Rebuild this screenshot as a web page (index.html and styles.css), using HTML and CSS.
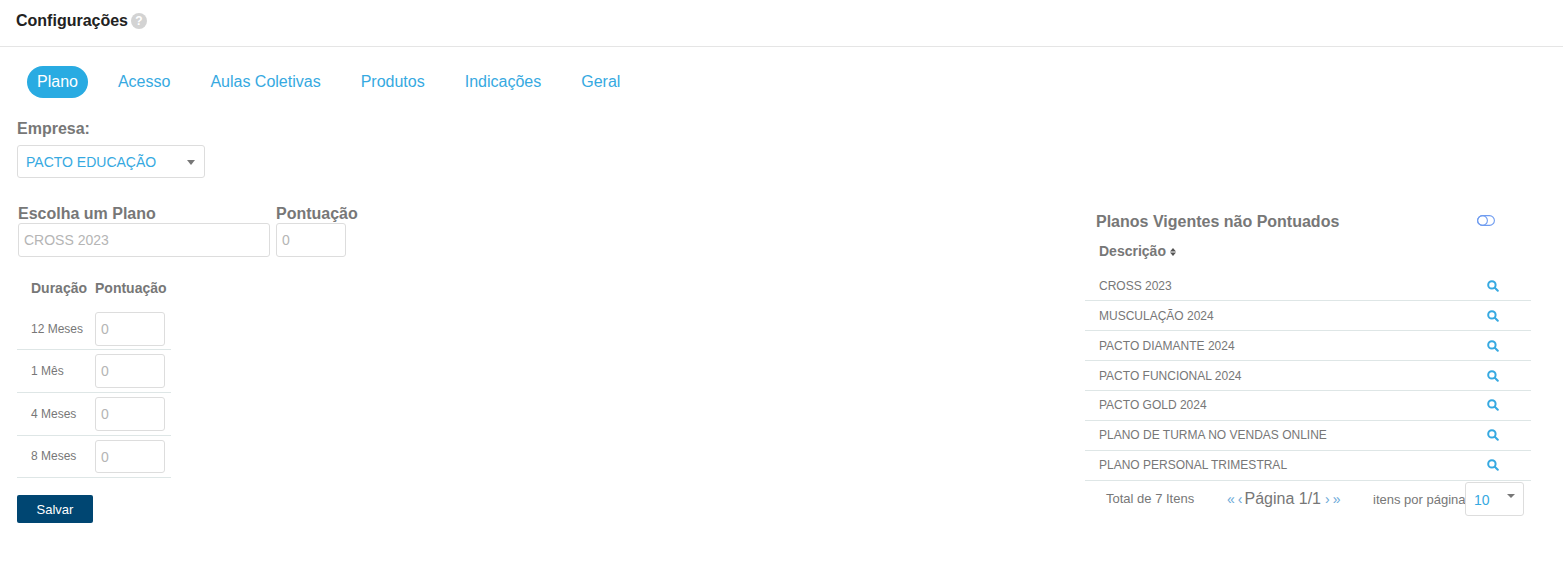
FILE: index.html
```html
<!DOCTYPE html>
<html lang="pt">
<head>
<meta charset="utf-8">
<title>Configurações</title>
<link rel="stylesheet" href="styles.css">
</head>
<body>
<header class="topbar">
  <h1 class="title">Configurações</h1>
  <svg class="help" viewBox="0 0 16 16" width="16" height="16"><circle cx="8" cy="8" r="8" fill="#d3d3d3"/><text x="8" y="12.4" text-anchor="middle" class="help-mark">?</text></svg>
</header>
<main class="content">
  <nav class="tabs">
    <a class="tab active">Plano</a>
    <a class="tab">Acesso</a>
    <a class="tab">Aulas Coletivas</a>
    <a class="tab">Produtos</a>
    <a class="tab">Indicações</a>
    <a class="tab">Geral</a>
  </nav>
  <label class="company-label">Empresa:</label>
  <div class="select company-select"><span>PACTO EDUCAÇÃO</span><i class="caret"></i></div>
  <div class="columns">
    <section class="left">
      <div class="plan-form">
        <div class="field">
          <label class="field-label">Escolha um Plano</label>
          <div class="input plan-input">CROSS 2023</div>
        </div>
        <div class="field">
          <label class="field-label">Pontuação</label>
          <div class="input score-input">0</div>
        </div>
      </div>
      <div class="duration-table">
        <div class="duration-head"><span class="dur-col">Duração</span><span>Pontuação</span></div>
        <div class="duration-row short"><span class="dur-col">12 Meses</span><div class="input small-input">0</div></div>
        <div class="duration-row"><span class="dur-col">1 Mês</span><div class="input small-input">0</div></div>
        <div class="duration-row"><span class="dur-col">4 Meses</span><div class="input small-input">0</div></div>
        <div class="duration-row short last-row"><span class="dur-col">8 Meses</span><div class="input small-input last-input">0</div></div>
      </div>
      <button class="save">Salvar</button>
    </section>
    <section class="right">
      <div class="right-head">
        <h2 class="right-title">Planos Vigentes não Pontuados</h2>
        <svg class="toggle" viewBox="0 0 18 11" width="18" height="11"><rect x="0.6" y="0.6" width="16.8" height="9.8" rx="4.9"/><circle cx="5.5" cy="5.5" r="4.9"/></svg>
      </div>
      <div class="desc-head">Descrição <svg class="sort" viewBox="0 0 6 8" width="6" height="8"><path d="M3 0 6 3.4H0zM3 8 0 4.6h6z"/></svg></div>
      <ul class="plan-list">
        <li>CROSS 2023<svg class="search" viewBox="0 0 12 12" width="12" height="12"><circle cx="4.9" cy="4.9" r="3.7"/><path d="M7.8 7.8 10.8 10.8"/></svg></li>
        <li>MUSCULAÇÃO 2024<svg class="search" viewBox="0 0 12 12" width="12" height="12"><circle cx="4.9" cy="4.9" r="3.7"/><path d="M7.8 7.8 10.8 10.8"/></svg></li>
        <li>PACTO DIAMANTE 2024<svg class="search" viewBox="0 0 12 12" width="12" height="12"><circle cx="4.9" cy="4.9" r="3.7"/><path d="M7.8 7.8 10.8 10.8"/></svg></li>
        <li>PACTO FUNCIONAL 2024<svg class="search" viewBox="0 0 12 12" width="12" height="12"><circle cx="4.9" cy="4.9" r="3.7"/><path d="M7.8 7.8 10.8 10.8"/></svg></li>
        <li>PACTO GOLD 2024<svg class="search" viewBox="0 0 12 12" width="12" height="12"><circle cx="4.9" cy="4.9" r="3.7"/><path d="M7.8 7.8 10.8 10.8"/></svg></li>
        <li>PLANO DE TURMA NO VENDAS ONLINE<svg class="search" viewBox="0 0 12 12" width="12" height="12"><circle cx="4.9" cy="4.9" r="3.7"/><path d="M7.8 7.8 10.8 10.8"/></svg></li>
        <li>PLANO PERSONAL TRIMESTRAL<svg class="search" viewBox="0 0 12 12" width="12" height="12"><circle cx="4.9" cy="4.9" r="3.7"/><path d="M7.8 7.8 10.8 10.8"/></svg></li>
      </ul>
      <div class="pager">
        <span class="total">Total de 7 Itens</span>
        <span class="pages"><a class="arrow">«</a><a class="arrow">‹</a><span class="page-text">Página 1/1</span><a class="arrow">›</a><a class="arrow">»</a></span>
        <span class="per-page">itens por página</span>
        <div class="select per-select"><span>10</span><i class="caret"></i></div>
      </div>
    </section>
  </div>
</main>
</body>
</html>
```
FILE: styles.css
```css
* { box-sizing: border-box; }
html, body { margin: 0; padding: 0; }
body {
  background: #fff;
  font-family: "Liberation Sans", Arial, sans-serif;
  color: #777;
  width: 1563px;
  height: 584px;
  overflow: hidden;
}
.topbar {
  height: 47px;
  border-bottom: 1px solid #e5e5e5;
  display: flex;
  align-items: center;
  padding: 0 0 5px 16px;
  gap: 3px;
}
.title { margin: 0; font-size: 16px; font-weight: 700; color: #222; }
.help-mark { font: 700 12px "Liberation Sans", Arial, sans-serif; fill: #fff; }
.content { padding: 19px 32px 0 17px; }
.tabs { display: flex; padding-left: 10px; gap: 20px; height: 32px; }
.tab {
  font-size: 16px;
  line-height: 32px;
  padding: 0 10px;
  color: #36a9e1;
  border-radius: 16px;
}
.tab.active { background: #29abe2; color: #fff; }
.company-label {
  display: block;
  margin-top: 22px;
  font-size: 16px;
  line-height: 18px;
  font-weight: 700;
  color: #777;
}
.select {
  display: flex;
  align-items: center;
  justify-content: space-between;
  border: 1px solid #ddd;
  border-radius: 3px;
  color: #36a9e1;
}
.company-select {
  width: 188px;
  height: 33px;
  margin-top: 7px;
  font-size: 14px;
  padding: 0 9px 0 8px;
}
.caret {
  width: 0;
  height: 0;
  border-left: 4.5px solid transparent;
  border-right: 4.5px solid transparent;
  border-top: 5px solid #777;
  margin-top: 2px;
}
.columns { display: flex; justify-content: space-between; margin-top: 26px; }
.left { width: 400px; }
.plan-form { display: flex; gap: 6px; padding-left: 1px; }
.field-label {
  display: block;
  font-size: 16px;
  line-height: 19px;
  font-weight: 700;
  color: #777;
}
.input {
  border: 1px solid #ddd;
  border-radius: 3px;
  color: #b5b5b5;
  display: flex;
  align-items: center;
}
.plan-input { width: 252px; height: 34px; font-size: 14px; padding-left: 5px; }
.score-input { width: 70px; height: 34px; font-size: 14px; padding-left: 5px; }
.duration-table { width: 154px; margin-top: 22px; font-size: 12px; }
.duration-head {
  display: flex;
  height: 29px;
  font-size: 14px;
  line-height: 18px;
  font-weight: 700;
  color: #777;
  padding-left: 14px;
  white-space: nowrap;
}
.duration-head .dur-col { width: 64px; }
.duration-row {
  display: flex;
  align-items: center;
  height: 43px;
  border-bottom: 1px solid #dee6e6;
  padding-left: 14px;
}
.duration-row.short { height: 42px; }
.duration-row .dur-col { width: 64px; }
.last-row .dur-col { padding-bottom: 2px; }
.small-input { width: 70px; height: 34px; font-size: 14px; padding-left: 5px; }
.small-input.last-input { height: 33px; }
.save {
  display: block;
  width: 76px;
  height: 28px;
  margin-top: 17px;
  background: #004672;
  border: 0;
  border-radius: 2px;
  color: #fff;
  font: 13px "Liberation Sans", Arial, sans-serif;
}
.right { width: 446px; margin-top: 8px; }
.right-head { display: flex; align-items: center; height: 20px; padding-left: 11px; }
.right-title { margin: 0; font-size: 16px; font-weight: 700; color: #777; width: 381px; white-space: nowrap; }
.toggle { fill: none; stroke: #6f9cf0; stroke-width: 1.1; margin-bottom: 4px; }
.desc-head {
  margin-top: 9px;
  padding-left: 14px;
  height: 20px;
  line-height: 20px;
  font-size: 14px;
  font-weight: 700;
  color: #777;
}
.sort { fill: #555; }
.plan-list { list-style: none; margin: 10.5px 0 0; padding: 0; }
.plan-list li {
  display: flex;
  align-items: center;
  justify-content: space-between;
  height: 29.86px;
  border-bottom: 1px solid #dee6e6;
  padding: 0 32px 0 14px;
  font-size: 12px;
  color: #777;
}
.search { fill: none; stroke: #36a9e1; stroke-width: 2; stroke-linecap: round; }
.pager { display: flex; align-items: flex-start; height: 36px; font-size: 13px; }
.total { width: 141px; padding-left: 21px; margin-top: 10px; }
.pages { display: flex; align-items: baseline; gap: 3px; width: 147px; padding-left: 1px; font-size: 16px; margin-top: 9px; white-space: nowrap; }
.page-text { margin: 0 1px 0 -1px; }
.arrow { color: #6ba9d8; font-size: 14px; }
.per-page { margin-top: 11px; white-space: nowrap; width: 92px; }
.per-select { width: 59px; height: 34px; margin-top: 1px; font-size: 14px; padding: 0 8px 0 8px; }
.per-select span { margin-top: 2px; }
.per-select .caret { margin-top: -6px; border-left-width: 4px; border-right-width: 4px; border-top-width: 4px; }
```
